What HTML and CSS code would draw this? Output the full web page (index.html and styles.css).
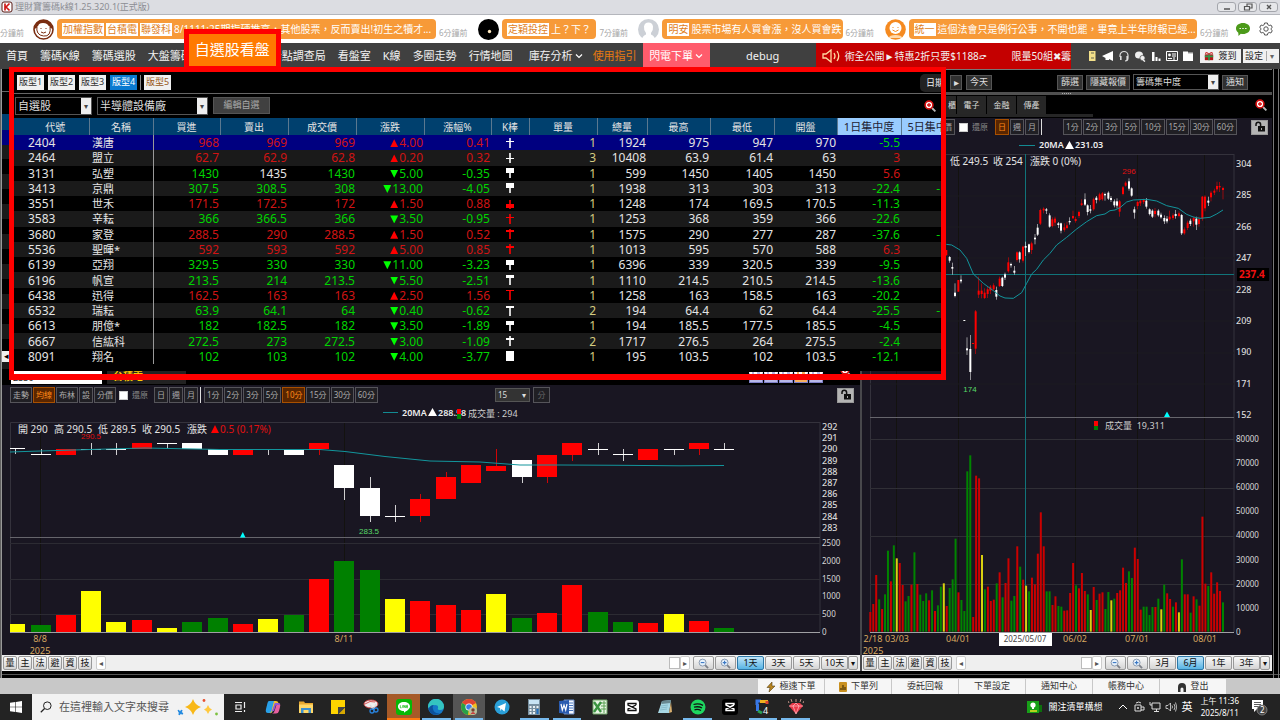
FILE: index.html
```html
<!DOCTYPE html>
<html lang="zh-Hant">
<head>
<meta charset="utf-8">
<title>理財寶籌碼k線</title>
<link rel="stylesheet" href="styles.css">
</head>
<body>
<svg width="0" height="0" class="defs" aria-hidden="true">
  <symbol id="zoom" viewBox="0 0 12 12"><path d="M8 8l3.400 3.400" stroke="#bbb" stroke-width="1.800"/><circle cx="5" cy="5" r="3.900" fill="#fff" stroke="#d81010" stroke-width="1.600"/><path d="M5 3v4M3 5h4" stroke="#d81010" stroke-width="1.300"/></symbol>
  <symbol id="lock" viewBox="0 0 16 14"><path d="M4 6V4.500a2.300 2.300 0 0 1 4.600 0V6" fill="none" stroke="#111" stroke-width="1.500"/><rect x="6" y="6" width="7" height="5.500" fill="#111"/><rect x="9" y="8" width="1" height="2" fill="#aaa"/></symbol>
  <symbol id="minus" viewBox="0 0 12 12"><path d="M7.800 7.800L11 11" stroke="#7c8088" stroke-width="2"/><circle cx="5" cy="5" r="3.800" fill="#e6f1fb" stroke="#8394ab"/><path d="M3 5h4" stroke="#3b78c4" stroke-width="1.200"/></symbol>
  <symbol id="plus" viewBox="0 0 12 12"><path d="M7.800 7.800L11 11" stroke="#7c8088" stroke-width="2"/><circle cx="5" cy="5" r="3.800" fill="#e6f1fb" stroke="#8394ab"/><path d="M3 5h4M5 3v4" stroke="#3b78c4" stroke-width="1.200"/></symbol>
  <symbol id="chev" viewBox="0 0 8 8"><path d="M1 2.500l3 3 3-3" fill="none" stroke="#fff" stroke-width="1.200"/></symbol>
</svg>

<header class="titlebar">
  <svg class="app-icon" viewBox="0 0 12 12"><rect x="1" y="1" width="10" height="10" rx="2" fill="#fff" stroke="#5a1a14"/><path d="M4 2.500v7M8.500 2.500L5 6l3.500 3.500" fill="none" stroke="#d01818" stroke-width="1.700"/></svg>
  <span class="title">理財寶籌碼k線1.25.320.1(正式版)</span>
  <button class="win" aria-label="最小化"><svg viewBox="0 0 10 8"><path d="M2 6h6" stroke="#555" stroke-width="1.500"/></svg></button>
  <button class="win" aria-label="還原"><svg viewBox="0 0 10 8"><path d="M4 3V1h5v4H7M1.500 3.500h5v3.500h-5z" fill="none" stroke="#555" stroke-width="1.200"/></svg></button>
  <button class="win" aria-label="關閉"><svg viewBox="0 0 10 8"><path d="M3 2l4 4M7 2L3 6" stroke="#555" stroke-width="1.400"/></svg></button>
</header>

<section class="ticker">
  <span class="ago lead">分鐘前</span>
  <svg class="avatar" viewBox="0 0 21 21"><circle cx="10.500" cy="10.500" r="9.500" fill="#fff" stroke="#7a2c10" stroke-width="1.600"/><path d="M1.500 10a9 9 0 0 1 18 0l-3.500-2q-1-4-6-4T5 8z" fill="#7a2c10"/><path d="M4 7q-1.500 9 6.500 10T17 7" fill="#fff" stroke="#7a2c10"/><path d="M8 9v1M13 9v1M8 13q2.500 2 5 0" fill="none" stroke="#7a2c10"/></svg>
  <div class="bubble b1"><b>加權指數</b><b>台積電</b><b>聯發科</b><span>8/1111:25期指硬推高，其他股票，反而賣出!初生之犢才...</span></div>
  <span class="ago">6分鐘前</span>
  <svg class="avatar" viewBox="0 0 21 21"><circle cx="10.500" cy="10.500" r="10.500"/><circle cx="11.500" cy="12.500" r="1.700" fill="#ffe9c0"/></svg>
  <div class="bubble b2"><b>定穎投控</b><span>上？下？</span></div>
  <span class="ago">7分鐘前</span>
  <svg class="avatar" viewBox="0 0 21 21"><circle cx="10.500" cy="10.500" r="10.500" fill="#ccd0d6"/><path d="M4 21q0-4 4-5.500V14Q5.500 11 6 7.500q.6-4 4.500-4T15 7.500q.5 3.500-2 6.500v1.500Q17 17 17 21z" fill="#fff"/></svg>
  <div class="bubble b3"><b>明安</b><span>股票市場有人買會漲，沒人買會跌</span></div>
  <span class="ago">6分鐘前</span>
  <svg class="avatar" viewBox="0 0 21 21"><circle cx="10.500" cy="10.500" r="10.300" fill="#f58a20"/><circle cx="10.500" cy="9" r="6" fill="#fff"/><path d="M3.500 19q1-3 7-3t7 3" fill="#ffd9ab"/><path d="M8 8v1M13 8v1M7.500 11q3 3 6 0" fill="none" stroke="#f58a20"/></svg>
  <div class="bubble b4"><b>統一</b><span>這個法會只是例行公事，不開也罷，畢竟上半年財報已經...</span></div>
  <span class="ago last">6分鐘前</span>
  <svg class="chat" viewBox="0 0 16 15"><path d="M8 1c4 0 7 2.300 7 5.500S12 12 8 12c-.8 0-1.500 0-2.200-.3L3.500 14l-.2-3.300C1.800 9.600 1 8.100 1 6.500 1 3.300 4 1 8 1z" fill="#4c9a1a"/><path d="M4.500 6.500h1.400M7.300 6.500h1.400M10.100 6.500h1.400" stroke="#fff" stroke-width="1.200"/></svg>
  <svg class="gear" viewBox="0 0 14 14"><path d="M5.600 1h2.800l.4 1.700 1.400.8 1.700-.5 1.400 2.400L12 6.500v1l1.300 1.100-1.400 2.400-1.700-.5-1.400.8L8.400 13H5.600l-.4-1.700-1.400-.8-1.700.5L.7 8.600 2 7.500v-1L.7 5.400 2.100 3l1.700.5 1.400-.8z" fill="none" stroke="#555"/><circle cx="7" cy="7" r="2.200" fill="none" stroke="#555"/></svg>
</section>

<nav class="menu">
  <a href="#">首頁</a><a href="#">籌碼K線</a><a href="#">籌碼選股</a><a href="#">大盤籌碼</a>
  <span class="current"><a href="#" class="badge">自選股看盤</a></span>
  <a href="#">分點調查局</a><a href="#">看盤室</a><a href="#">K線</a><a href="#">多圈走勢</a><a href="#">行情地圖</a>
  <a href="#" class="drop">庫存分析 <svg><use href="#chev"/></svg></a>
  <a href="#" class="guide">使用指引</a>
  <button class="flash">閃電下單 <svg><use href="#chev"/></svg></button>
  <span class="debug">debug</span>
  <div class="promo"><svg viewBox="0 0 20 14"><path d="M1 5h3l5-4v12L4 9H1z" fill="none" stroke="#ffd9a0" stroke-width="1.300"/><path d="M12 4q2 3 0 6M15 2q3.500 5 0 10" fill="none" stroke="#ffd9a0" stroke-width="1.300"/></svg><span>術全公開►特惠2折只要$1188👉︎</span><span class="p2">限量50組✖籌</span></div>
  <div class="tools">
    <svg viewBox="0 0 12 12"><rect x="3" y="1" width="6.500" height="10" fill="#f3e08a"/><path d="M5 3h3M5 8h3" stroke="#665"/></svg>
    <svg viewBox="0 0 12 12"><path d="M0 6l11-5v10L7 9v1H3.500V8z" fill="#fff"/></svg>
    <svg viewBox="0 0 12 12"><path d="M2 7V5.500a4 4 0 0 1 8 0V8q0 3-3 3" fill="none" stroke="#ddd" stroke-width="1.200"/><path d="M2 6h1.600v4H2zM8.400 6H10v4H8.400z" fill="#ddd"/></svg>
    <svg viewBox="0 0 12 12"><ellipse cx="5" cy="5" rx="4" ry="3.600" fill="#eee"/><circle cx="8.500" cy="8" r="2.600" fill="#eee" stroke="#404040" stroke-width=".7"/><path d="M9 10l2 1.500" stroke="#eee" stroke-width="1.500"/></svg>
    <svg viewBox="0 0 12 12"><path d="M2 2h2.500v9H2zM5.500 7h2v4h-2zM8.500 8.500h2V11h-2z" fill="#fff"/></svg>
    <svg viewBox="0 0 12 12"><path d="M.5 1.500h11v9H.5z" fill="none" stroke="#fff"/><circle cx="3.500" cy="5" r="1.400" fill="#fff"/><path d="M6 4h4M6 6h4M2 8.500h4M8 7v3" stroke="#fff"/></svg>
    <svg viewBox="0 0 12 12"><path d="M1 1.500h5v1h5v8.500H1z" fill="#fff"/><path d="M6 3h5" stroke="#666" stroke-width=".6"/></svg>
    <button class="light"><svg viewBox="0 0 12 12"><path d="M1 4h10v7H1z" fill="#b01818"/><path d="M6 3v8M1 6.500h10" stroke="#2e9a4a" stroke-width="2"/><path d="M6 4Q2 0 2 3.500M6 4q4-4 4-.5" fill="none" stroke="#c33" stroke-width="1.300"/></svg>簽到</button>
    <button class="light set">設定<i>▾</i></button>
  </div>
</nav>

<main class="workspace">
  <section class="panel">
    <div class="under"><button aria-label="向左捲動">◂</button></div>
    <div class="symbolrow">
      <input aria-label="股票代號" value="2330"><span class="symname">台積電</span>
      <div class="minis"><i></i><i></i><i></i><i class="on"></i><i></i></div>
      <svg class="zoomicon"><use href="#zoom"/></svg>
    </div>
    <div class="chartbar">
      <button>走勢</button><button class="on">均線</button><button>布林</button><button>設</button><button>分價</button>
      <label><input type="checkbox">還原</label>
      <button>日</button><button>週</button><button>月</button><i class="sep"></i>
      <div class="mins"><button>1分</button><button>2分</button><button>3分</button><button>5分</button><button class="on">10分</button><button>15分</button><button>30分</button><button>60分</button></div>
      <div class="custom"><span class="sel small"><select aria-label="分鐘"><option>15</option></select></span><button class="dim">分</button></div>
      <button class="lock" aria-label="解鎖"><svg><use href="#lock"/></svg></button>
    </div>
    <svg class="chart" id="intraday" viewBox="2 407 858 248" preserveAspectRatio="xMinYMin meet">
      <path d="M383 412.500h15" stroke="#138a92"/>
      <g class="legend"><text x="402" y="416">20MA</text><path d="M428 416h9l-4.500-8z" fill="#fff"/><text x="438" y="416">288.58</text></g>
      <path d="M457 409h4v5h-4z" fill="#f00"/><path d="M457 414h4v5h-4z" fill="green"/>
      <text x="468" y="417" class="vol">成交量 : 294</text>
      <path d="M10.500 632V422.500H820M820 422v210" fill="none" stroke="#34323c"/>
      <path d="M40.500 423v209M344.500 423v209" stroke="#13120f"/>
      <path d="M10 543.500h810M10 579.500h810M10 614.500h810" stroke="#2c2b33"/>
      <path d="M10 537.500h810" stroke="#66656c"/>
      <g class="info"><text x="18" y="433">開 290</text><text x="54" y="433">高 290.5</text><text x="98" y="433">低 289.5</text><text x="142" y="433">收 290.5</text><text x="187" y="433">漲跌</text><path d="M211 433h8l-4-8z" fill="#f00"/><text x="220" y="433" class="up">0.5 (0.17%)</text></g>
      <g id="candlesA"></g>
      <path class="ma" d="M10 452l30-1 50-1.500 55-1.500 75 1.500h100l25 2 40 5 45 4.500 50 1 40 3h40l60 .3 60 .5 44-.3"/>
      <text x="91" y="439" class="mark up mid">290.5</text><text x="369" y="534" class="mark low mid">283.5</text>
      <path d="M240 537.500h5.500l-2.700-5.500z" fill="#0ff"/>
      <path d="M10 632.500h810" stroke="#a0a0a4"/>
      <g class="axis" id="axisA"></g>
      <g class="dates"><text x="40" y="642">8/8</text><text x="40" y="654">2025</text><text x="344" y="642">8/11</text></g>
    </svg>
    <div class="foot">
      <button>量</button><button>主</button><button>法</button><button>避</button><button>資</button><button>技</button><button class="arrow">◂</button>
      <div class="range"><i class="thumb"></i><button class="arrow">▸</button><button class="mag" aria-label="縮小"><svg><use href="#minus"/></svg></button><button class="mag" aria-label="放大"><svg><use href="#plus"/></svg></button><button class="r on">1天</button><button class="r">3天</button><button class="r">5天</button><button class="r">10天</button><button class="more">▾</button></div>
    </div>
  </section>
  <div class="divider"></div>
  <section class="panel">
    <div class="datebar">
      <button class="next" aria-label="下一日">▸</button><button>今天</button>
      <div class="filters"><button>篩選</button><button>隱藏報價</button><span class="sel ind"><select aria-label="指標"><option>籌碼集中度</option></select></span><button>通知</button></div>
    </div>
    <div class="grip"><i></i></div>
    <div class="tabs"><button class="cut">櫃</button><button>電子</button><button>金融</button><button>傳產</button><svg class="zoomicon"><use href="#zoom"/></svg></div>
    <div class="chartbar right">
      <button>分價</button><label><input type="checkbox">還原</label>
      <button class="on">日</button><button>週</button><button>月</button><i class="sep"></i>
      <div class="mins"><button>1分</button><button>2分</button><button>3分</button><button>5分</button><button>10分</button><button>15分</button><button>30分</button><button>60分</button></div>
      <button class="lock" aria-label="解鎖"><svg><use href="#lock"/></svg></button>
    </div>
    <svg class="chart" id="daily" viewBox="862 138 410 517" preserveAspectRatio="xMinYMin meet">
      <path d="M1019 145.500h16" stroke="#138a92"/>
      <g class="legend"><text x="1039" y="148">20MA</text><path d="M1065 149h9l-4.500-8z" fill="#fff"/><text x="1075" y="148">231.03</text></g>
      <path d="M870.500 632V154.500H1234M1234 154v478" fill="none" stroke="#34323c"/>
      <path d="M896.500 155v477M958.500 155v477M1075.500 155v477M1137.500 155v477M1204.500 155v477" stroke="#13120f"/>
      <path d="M870 196h364M870 227h364M870 258h364M870 290h364M870 321h364M870 353h364M870 384h364" stroke="#1d1a20"/>
      <path d="M870 439.500h364M870 488.500h364M870 536.500h364M870 584.500h364" stroke="#302f36"/>
      <path d="M870 417.500h364" stroke="#66656c"/>
      <path d="M1025.500 154v478M870 274.500h364" stroke="#11747a"/>
      <g class="info"><text x="950" y="165">低 249.5</text><text x="993" y="165">收 254</text><text x="1030" y="165">漲跌 0 (0%)</text></g>
      <g id="candlesB" transform="translate(850 140) scale(.33333)"></g>
      <g transform="translate(850 140) scale(.33333)"><path class="ma wide" d="M289 313L305 315 330 330 350 355 370 402 400 430 430 452 450 468 465 474 490 475 515 458 530 430 545 402 560 388 580 360 600 340 620 315 650 292 680 267 710 245 740 227 765 222 780 212 795 210 810 203 830 186 850 180 890 178 920 183 950 197 985 205 1010 223 1030 231 1050 235 1080 232 1100 222 1119 210"/></g>
      <g id="volB" transform="translate(850 410) scale(.33333)"></g>
      <text x="1129" y="174" class="mark up mid">296</text><text x="970" y="392" class="mark low mid">174</text>
      <path d="M1164 417h6l-3-5.500z" fill="#0ff"/>
      <path d="M1094 421h4v5h-4z" fill="#f00"/><path d="M1094 426h4v4h-4z" fill="green"/><text x="1105" y="429" class="vol">成交量&#160; 19,311</text>
      <path d="M870 632.500h364" stroke="#a0a0a4"/>
      <g class="axis" id="axisB"></g>
      <rect x="1237" y="268" width="32" height="13"/><text x="1239" y="278" class="hot">237.4</text>
      <g class="dates"><text x="873" y="642">2/18</text><text x="897" y="642">03/03</text><text x="873" y="654">2025</text><text x="958" y="642">04/01</text><text x="1075" y="642">06/02</text><text x="1137" y="642">07/01</text><text x="1205" y="642">08/01</text></g>
      <rect x="999" y="633" width="53" height="13" fill="#fff"/><text x="1025" y="642" class="tip">2025/05/07</text>
    </svg>
    <div class="foot">
      <button>量</button><button>主</button><button>法</button><button>避</button><button>資</button><button>技</button><button class="arrow">◂</button>
      <div class="range"><i class="thumb"></i><button class="arrow">▸</button><button class="mag" aria-label="縮小"><svg><use href="#minus"/></svg></button><button class="mag" aria-label="放大"><svg><use href="#plus"/></svg></button><button class="r">3月</button><button class="r on">6月</button><button class="r">1年</button><button class="r">3年</button><button class="more">▾</button></div>
    </div>
  </section>

  <section class="watch">
    <div class="layouts"><button>版型1</button><button>版型2</button><button>版型3</button><button class="on">版型4</button><i></i><button class="fifth">版型5</button><span class="datelabel">日期</span></div>
    <div class="pickers"><span class="sel s1"><select aria-label="清單"><option>自選股</option></select></span><span class="sel s2"><select aria-label="群組"><option>半導體設備廠</option></select></span><button>編輯自選</button><svg class="zoomicon"><use href="#zoom"/></svg></div>
    <div class="tablebox">
      <table>
        <colgroup><col class="w75"><col class="w64"><col class="w67"><col class="w68"><col class="w68"><col class="w68"><col class="w67"><col class="w38"><col class="w68"><col class="w50"><col class="w63"><col class="w64"><col class="w63"><col class="w64"><col class="w40"></colgroup>
        <thead><tr><th>代號</th><th>名稱</th><th>買進</th><th>賣出</th><th>成交價</th><th>漲跌</th><th>漲幅%</th><th>K棒</th><th>單量</th><th>總量</th><th>最高</th><th>最低</th><th>開盤</th><th class="ind">1日集中度</th><th class="ind cut">5日集中度</th></tr></thead>
        <tbody id="rows"></tbody>
      </table>
    </div>
  </section>
</main>

<div class="status">
  <button><svg viewBox="0 0 10 10"><path d="M6 0L1 5.500h3L3 10l6-6H6z" fill="#b88420" stroke="#554010" stroke-width=".6"/></svg>極速下單</button>
  <button><svg viewBox="0 0 10 10"><rect x="1" y="0" width="8" height="10" rx="1" fill="#c89020"/><path d="M3 8V6M5 8V3M7 8V5" stroke="#332200"/></svg>下單列</button>
  <button>委託回報</button><button>下單設定</button><button>通知中心</button><button>帳務中心</button>
  <button><svg viewBox="0 0 10 10"><path d="M1 10V5Q1 1 5 1t4 4v5H6.500V7Q6.500 5.500 5 5.500T3.500 7v3z" fill="#333"/></svg>登出</button>
</div>

<footer class="taskbar">
  <button class="start" aria-label="開始"><svg viewBox="0 0 12 12"><path d="M0 1.700L5.400 1v4.700H0zM6 .9L12 0v5.700H6zM0 6.300h5.400V11L0 10.300zM6 6.300h6V12l-6-.9z" fill="#fff"/></svg></button>
  <label class="search"><svg viewBox="0 0 12 12"><circle cx="7.300" cy="4.700" r="3.800" fill="none" stroke="#222"/><path d="M4.600 7.500L.8 11.200" stroke="#222" stroke-width="1.200"/></svg><input placeholder="在這裡輸入文字來搜尋" aria-label="搜尋"><svg class="spark" viewBox="0 0 42 18"><path d="M16 1q2 6 8 8-6 2-8 8-2-6-8-8 6-2 8-8z" fill="#f8b818"/><path d="M31 7q1 3.500 4 4.500-3 1-4 4.500-1-3.500-4-4.500 3-1 4-4.500z" fill="#ffc940"/><path d="M1 12l2 1.500L5 12l-.5 2L6 16l-2.300-.3L2 17l.2-2.300z" fill="#1e88e0" stroke="#1e88e0"/><circle cx="27" cy="2.500" r="1.400" fill="#e85030"/><circle cx="39.500" cy="16" r="1.400" fill="#7cc040"/></svg></label>
  <div class="apps">
    <button aria-label="工作檢視"><svg viewBox="0 0 16 16"><path d="M3 3.500h7M3 12.500h7M4 6h5v4H4zM12.500 3v6M12.500 11v2" fill="none" stroke="#eee" stroke-width="1.200"/></svg></button>
    <button aria-label="Copilot"><svg viewBox="0 0 16 16"><path d="M4 2h5q2 0 1 3L8 12q-1 2-3 2H3Q0 14 1 10L2.500 4Q3 2 4 2z" fill="#28a0e8"/><path d="M9 2h2q2 0 2.500 2H10L7 13q-.7 1.500-2 1H4q2 0 2.500-2z" fill="#f0c030"/><path d="M12 4h1q3 0 2 4l-1 4q-.7 2.500-3 2.500H7Q9 14 9.500 12z" fill="#e860a0"/><path d="M10 4h3q2 0 2 2h-4L9 12H7z" fill="#9058d8"/></svg></button>
    <button aria-label="檔案總管"><svg viewBox="0 0 16 16"><path d="M1 2.500h5l1 1.500h8v9H1z" fill="#e8a830"/><path d="M1 5.500h14V14H1z" fill="#ffd868"/><path d="M3 9h10v5H3z" fill="#3c90d0"/><path d="M5.500 11h5v3h-5z" fill="#ffd868"/></svg></button>
    <button aria-label="自黏便箋"><svg viewBox="0 0 16 16"><path d="M1 1h14v14H1z" fill="#ffd400"/><path d="M8 8h7v1l-6 6H8z" fill="#444"/><path d="M15 9v6H9z" fill="#d8a800"/></svg></button>
    <button aria-label="剪取工具"><svg viewBox="0 0 16 16"><ellipse cx="8" cy="5" rx="7" ry="4" fill="#eee" stroke="#c44"/><path d="M2 5q5-4 10-2" stroke="#d55" fill="none"/><path d="M7 6l4 5M13 5l-3 6" stroke="#ddd" stroke-width="1.300"/><circle cx="9" cy="12" r="2" fill="none" stroke="#2880d8" stroke-width="1.300"/><circle cx="13" cy="11" r="2" fill="none" stroke="#2880d8" stroke-width="1.300"/></svg></button>
    <button class="line" aria-label="LINE"><svg viewBox="0 0 16 16"><rect width="16" height="16" rx="3" fill="#06b806"/><path d="M8 3c3.500 0 6 2 6 4.500S10.500 12 8 13.700V12C4.500 12 2 10 2 7.500S4.500 3 8 3z" fill="#fff"/><path d="M4.300 6.200v2.600h1.300M6.700 6.200v2.600M7.800 8.800V6.200l1.500 2.600V6.200M12 6.300h-1.400v2.400H12M10.600 7.500H12" stroke="#06b806" stroke-width=".7" fill="none"/></svg></button>
    <button class="open" aria-label="Edge"><svg viewBox="0 0 16 16"><circle cx="8" cy="8" r="8" fill="#1478c8"/><path d="M0 8a8 8 0 0 1 16-.5q0 3.500-4 3.500-3 0-2-2 .5-3-3-3Q3 6 0 9z" fill="#34c4c0"/><path d="M5 10q1 5 7 4-4 3-8 1-3-2-3-5 1-4 5-4-2 1-1 4z" fill="#0c509c"/></svg></button>
    <button class="open active" aria-label="Chrome"><svg viewBox="0 0 16 16"><circle cx="8" cy="8" r="8" fill="#f0c020"/><path d="M8 8L1.200 4A8 8 0 0 1 15 4z" fill="#e04434"/><path d="M8 8l-6.800-4A8 8 0 0 0 7 16z" fill="#28a048"/><circle cx="8" cy="8" r="3.600" fill="#fff"/><circle cx="8" cy="8" r="2.800" fill="#3c7ce8"/><circle cx="12" cy="12" r="4" fill="#b8c0a0"/><circle cx="12" cy="11" r="1.700" fill="#7a4030"/><path d="M9.500 15q2.500-4 5 0z" fill="#c84040"/></svg></button>
    <button aria-label="Telegram"><svg viewBox="0 0 16 16"><circle cx="8" cy="8" r="7.500" fill="#2a9fd8"/><path d="M3 8l9-4-1.500 8.500L7.500 10 6.500 12 6 9z" fill="#fff"/></svg></button>
    <button class="open" aria-label="小算盤"><svg viewBox="0 0 16 16"><path d="M2 0h12v16H2z" fill="#7890a0"/><path d="M3 1h10v4H3z" fill="#c8e4f4"/><path d="M3.500 7h2v2h-2zM7 7h2v2H7zM3.500 10h2v2h-2zM7 10h2v2H7zM3.500 13h2v2h-2zM7 13h2v2H7zM10.500 7h2v2h-2z" fill="#e8f0f4"/><path d="M10.500 10h2v5h-2z" fill="#2070c0"/></svg></button>
    <button class="open" aria-label="Word"><svg viewBox="0 0 16 16"><path d="M5 1h10v14H5z" fill="#f4f8ff" stroke="#6888c0"/><path d="M10 4h4M10 6.500h4M10 9h4M10 11.500h4" stroke="#4878c0"/><path d="M0 2l10-1v14L0 14z" fill="#2a5cb0"/><path d="M2 5l1.300 6L5 6l1.700 5L8 5" fill="none" stroke="#fff" stroke-width="1.200"/></svg></button>
    <button aria-label="Excel"><svg viewBox="0 0 16 16"><path d="M1 1h14v14H1z" fill="#e8f4e4" stroke="#70a868"/><path d="M9 4h5M9 7h5M9 10h5M12 2v12" stroke="#58a050"/><path d="M2 3l7 10M9 3L2 13" stroke="#3a9440" stroke-width="2.400"/></svg></button>
    <button aria-label="CapCut"><svg viewBox="0 0 16 16"><rect x="1" y="1" width="14" height="14" rx="3" fill="#fff"/><path d="M12 6V4.500H4V6l8 4v1.500H4V10l8-4" fill="none" stroke="#111" stroke-width="1.300"/></svg></button>
    <button aria-label="記事本"><svg viewBox="0 0 16 16"><path d="M5 2l9-1-2 13H1z" fill="#a8d8e4"/><path d="M5 2l9-1-.5 3-9 1z" fill="#688890"/><path d="M12 14l3-1-1-10z" fill="#d8b070"/><path d="M4 7l7-1M3.500 9l7-1M3 11l7-1" stroke="#70a8b8" stroke-width=".6"/></svg></button>
    <button class="open" aria-label="Spotify"><svg viewBox="0 0 16 16"><circle cx="8" cy="8" r="7.500" fill="#1ed760"/><path d="M3.500 5.500q5-1.500 9.500.8M4 8.200q4.500-1.200 8 .8M4.500 10.800q3.500-1 6.500.7" fill="none" stroke="#111" stroke-width="1.300"/></svg></button>
    <button aria-label="CapCut 專業版"><svg viewBox="0 0 16 16"><rect width="16" height="16" rx="3" fill="#000"/><path d="M12 6V4.500H4V6l8 4v1.500H4V10l8-4" fill="none" stroke="#fff" stroke-width="1.400"/></svg></button>
    <button class="open" aria-label="Google"><svg viewBox="0 0 16 16"><path d="M2 6V2h4" stroke="#3878e8" stroke-width="3" fill="none"/><path d="M5 2.500h8" stroke="#f0b020" stroke-width="3"/><path d="M2.500 5v7" stroke="#3878e8" stroke-width="3"/><path d="M3 12l4 2" stroke="#28a050" stroke-width="3"/><path d="M12 2v3" stroke="#e04030" stroke-width="3"/><text x="8" y="15" font-size="9" fill="#fff">4</text></svg></button>
    <button class="open" aria-label="寶石"><svg viewBox="0 0 16 16"><path d="M1 7l3-3h8l3 3-7 8z" fill="#e83848"/><path d="M1 7h14M5 7l3 8 3-8-3-3z" fill="none" stroke="#ffc0c8" stroke-width=".7"/><path d="M1 4L0 2M4 3L3 0M8 3V0M12 3l1-3M15 4l1-2" stroke="#e8b0a0" stroke-width=".8"/></svg></button>
  </div>
  <div class="tray">
    <svg class="news" viewBox="0 0 15 13"><path d="M0 0h12v12H0z" fill="#18a018"/><path d="M12 4h3v7h-3z" fill="#0c700c"/><path d="M3 10h7" stroke="#e8e020" stroke-width="1.500"/><circle cx="6" cy="4" r="2.600" fill="#fff"/><path d="M5 6h2v2H5z" fill="#fff"/></svg>
    <span class="topic">關注清單構想</span>
    <svg class="ti" viewBox="0 0 12 12"><path d="M2 8l4-4 4 4" fill="none" stroke="#fff"/></svg>
    <svg class="ti" viewBox="0 0 12 12"><path d="M2 4h6v6H2zM8 6h3v3H8M3 2q3-2 5 0" fill="none" stroke="#ddd"/><circle cx="5" cy="7" r="1" fill="#ddd"/></svg>
    <svg class="ti" viewBox="0 0 12 12"><path d="M3 2h8v6H3zM5 10.500h5M7.500 8v2M1 1v3h2" fill="none" stroke="#ddd"/></svg>
    <svg class="ti" viewBox="0 0 12 12"><path d="M1 4.500h2l2.500-2.500v8L3 7.500H1zM7 4.500q1 1.500 0 3M9 3q2 3 0 6M10.500 1.500q2.500 4.500 0 9" fill="none" stroke="#ddd" stroke-width=".8"/></svg>
    <span class="ime">英</span>
    <time>上午 11:36<br>2025/8/11</time>
    <svg class="notice" viewBox="0 0 17 17"><path d="M1 1h11v9H6l-3 3v-3H1z" fill="#fff"/><path d="M3 3.500h7M3 5.500h7M3 7.500h5" stroke="#333" stroke-width=".8"/><circle cx="11" cy="11" r="5" fill="#444" stroke="#999" stroke-width=".7"/><text x="9" y="14" font-size="8" fill="#fff">2</text></svg>
  </div>
</footer>
<script src="app.js"></script>
</body>
</html>
```
FILE: styles.css
```css
* { box-sizing: border-box; }
html, body { height: 100%; }
body {
  margin: 0; min-height: 720px; display: flex; flex-direction: column; overflow: hidden;
  background: #000; color: #ddd;
  font: 10px/1.2 "Noto Sans", "Noto Sans CJK TC", sans-serif;
}
button, input, select { font: inherit; color: inherit; margin: 0; padding: 0; border: 0; background: none; }
button { display: inline-flex; align-items: center; justify-content: center; white-space: nowrap; }
a { color: inherit; text-decoration: none; white-space: nowrap; }
i { font-style: normal; }
svg { flex: none; }
.defs { position: absolute; }

.titlebar { height: 15px; flex: none; display: flex; align-items: center; gap: 2px; padding: 0 2px 0 1px; background: #dcdde2; border-bottom: 1px solid #b4b6bc; }
.app-icon { width: 12px; height: 12px; }
.title { flex: 1; color: #8c8e94; font-size: 9px; }
.win { width: 19px; height: 10px; border: 1px solid #a4a6ac; border-radius: 3px; background: #e6e7ea; }
.win svg { width: 10px; height: 8px; }

.ticker { height: 28px; flex: none; display: flex; align-items: center; background: #fff; padding-right: 7px; }
.ago { width: 42px; flex: none; padding: 8px 0 0 3px; font-size: 8px; color: #a8a8a8; white-space: nowrap; }
.ago.lead { width: 33px; padding-left: 0; }
.ago.last { width: 38px; }
.avatar { width: 21px; height: 21px; }
.bubble { margin-left: 3px; height: 20px; padding: 0 5px; border-radius: 4px; background: #f79a38; color: #fff; display: flex; align-items: center; gap: 2px; overflow: hidden; white-space: nowrap; min-width: 0; }
.bubble b { font-weight: 400; height: 13px; line-height: 12px; padding: 0 1px; background: #fff; color: #e0801c; flex: none; }
.bubble span { font-size: 10px; }
.b1 { flex: 371 1 0; } .b2 { flex: 85 1 0; } .b3 { flex: 171 1 0; } .b4 { flex: 280 1 0; }
.chat { width: 16px; height: 15px; margin-right: 8px; }
.gear { width: 14px; height: 14px; }

.menu { height: 26px; flex: none; display: flex; align-items: center; gap: 12px; padding-left: 6px; background: #404040; color: #f2f2f2; font-size: 11px; }
.current { position: relative; width: 55px; height: 26px; flex: none; }
.badge { position: absolute; z-index: 5; left: -20px; top: -14px; width: 97px; height: 40px; border: 5px solid #f00; border-bottom-width: 3px; background: #ff7a00; color: #fff; font-size: 15px; line-height: 31px; text-align: center; }
.drop, .flash { display: flex; align-items: center; gap: 2px; }
.drop { margin-left: 4px; }
.drop svg, .flash svg { width: 8px; height: 8px; }
.menu .guide { color: #e87a10; margin-left: -2px; }
.flash { height: 26px; width: 67px; margin-left: -6px; background: #ff5c6c; color: #fff; }
.debug { width: 106px; text-align: center; margin-left: -12px; font-size: 11px; }
.promo { flex: 1; min-width: 0; height: 26px; margin: 0 -12px; background: #c40000; display: flex; align-items: center; gap: 3px; padding-left: 6px; white-space: nowrap; overflow: hidden; font-size: 10px; }
.promo svg { width: 20px; height: 14px; }
.promo .p2 { margin-left: auto; }
.tools { width: 209px; flex: none; display: flex; align-items: center; gap: 4px; padding: 0 2px 0 15px; }
.tools > svg { width: 12px; height: 12px; }
.light { height: 14px; width: 41px; flex: none; background: #f0f0f0; color: #222; font-size: 9px; gap: 4px; margin-left: 2px; }
.light svg { width: 10px; height: 10px; }
.light.set { width: 36px; margin-left: -2px; gap: 3px; }
.light.set i { width: 11px; font-size: 8px; color: #666; border-left: 1px solid #aaa; }

.workspace { position: relative; flex: 1; min-height: 0; display: grid; grid-template-columns: minmax(0, 858fr) 2px minmax(0, 410fr); padding: 0 8px 7px 2px; background: linear-gradient(90deg, #606060 0 1px, #999 1px 2px, transparent 2px calc(100% - 7px), #777 calc(100% - 7px) calc(100% - 6px), transparent calc(100% - 6px) calc(100% - 2px), #777 calc(100% - 2px) calc(100% - 1px), transparent 0), linear-gradient(0deg, #000 0 3px, #555 3px 4px, #000 4px); }
.panel { display: flex; flex-direction: column; min-width: 0; min-height: 0; }
.divider { background: #48484c; }
.under { flex: none; height: 301px; display: flex; align-items: flex-end; padding-bottom: 8px; background: linear-gradient(#000 0 22px, #666 22px 23px, #000 23px 45px, #004070 45px 61px, #000080 61px 76px, transparent 76px), repeating-linear-gradient(#000 0 15px, #1b1b1b 15px 30px); }
.under button { width: 9px; height: 11px; background: #eee; color: #000; font-size: 9px; }
.symbolrow { flex: none; height: 15px; display: flex; align-items: center; padding: 1px 8px 1px 9px; background: #000; }
.symbolrow input { width: 91px; height: 13px; background: #fff; color: #222; padding-left: 2px; font-size: 9px; line-height: 9px; }
.symname { margin-left: 5px; width: 79px; height: 13px; padding-left: 6px; background: #222; color: #fc0; font-weight: 700; line-height: 10px; }
.symbolrow .zoomicon { align-self: flex-start; margin-top: -6px; }
.minis { margin-left: auto; display: flex; gap: 1px; margin-right: 17px; }
.minis i { width: 14px; height: 11px; background: #b8b8e8; border: 1px solid #8080c8; border-top: 3px dotted #fff; }
.minis .on { background: #f8b060; }
.zoomicon { width: 12px; height: 12px; }

.chartbar { flex: none; height: 22px; display: flex; align-items: center; padding: 0 6px 2px 8px; background: #191622; font-size: 8px; color: #aaa; gap: 1px; }
.chartbar button { height: 16px; padding: 0 2px; border: 1px solid #55545a; background: #201f24; flex: none; min-width: 14px; }
.chartbar button.on { background: #5a2600; border-color: #a85000; color: #ff8a18; }
.chartbar label { display: flex; align-items: center; gap: 4px; margin: 0 5px 0 2px; white-space: nowrap; color: #888; }
.chartbar input { appearance: none; width: 9px; height: 9px; background: #fff; border: 1px solid #ccc; }
.chartbar .sep { width: 1px; height: 16px; background: #ddd; margin: 0 2px 0 1px; }
.mins { display: flex; gap: 1px; }
.chartbar .custom { display: flex; gap: 3px; align-items: center; margin: 0 auto 0 116px; }
.chartbar .dim { color: #666; width: 17px; }
.chartbar .lock { width: 17px; height: 15px; background: #b4b4b4; padding: 0; border-color: #999; }
.lock svg { width: 16px; height: 14px; }
.chartbar.right { height: 20px; padding-left: 71px; padding-right: 4px; }
.right label { margin-left: 3px; margin-right: 6px; }
.right .mins { margin: 0 13px 0 auto; }

.sel { position: relative; display: inline-flex; height: 16px; border: 1px solid #555; background: #000; color: #ddd; flex: none; }
.sel select { appearance: none; width: 100%; padding: 0 12px 0 2px; outline: 0; }
.sel::after { content: "▾"; position: absolute; right: 0; top: 0; bottom: 0; width: 10px; background: #eee; color: #444; font-size: 8px; line-height: 14px; text-align: center; pointer-events: none; }
.sel.small { width: 35px; height: 14px; background: #333; }
.sel.small::after { background: none; color: #ddd; line-height: 11px; }
.sel.ind { width: 86px; }

.chart { flex: 1; min-height: 0; width: 100%; display: block; background: #191622; }
.legend { font-weight: 600; font-size: 9px; fill: #eee; }
.vol { font-size: 9px; fill: #ccc; }
.info { font-size: 10px; fill: #e4e4e4; }
.chart .up { fill: #e01010; }
.mark { font-family: "Liberation Sans", sans-serif; font-size: 8px; }
.low { fill: #58d868; }
.mid, .dates, .tip { text-anchor: middle; }
.ma { fill: none; stroke: #12959c; }
.ma.wide { stroke-width: 3; }
.axis { fill: #d8d8d8; font-size: 8px; }
.axis .price { font-size: 9px; font-weight: 500; }
.dates { fill: #d8a860; font-size: 9px; }
.tip { fill: #444; font-size: 8px; }
.hot { fill: #f01010; font-size: 10px; font-weight: 700; }

.foot { flex: none; height: 16px; display: flex; align-items: center; gap: 1px; padding: 0 2px 0 1px; background: #efefef; color: #111; font-size: 9px; }
.foot button { height: 14px; width: 14px; flex: none; border: 1px solid #999; border-radius: 2px; background: linear-gradient(#fafafa, #d4d4d4); }
.foot .arrow { width: 10px; margin-left: 3px; background: #fff; border-color: #ccc; font-size: 8px; color: #555; }
.range { margin-left: auto; display: flex; align-items: center; gap: 1px; }
.thumb { width: 11px; height: 12px; background: #fff; border: 1px solid #bbb; }
.foot .range .arrow { margin: 0 2px 0 -1px; }
.foot .mag { width: 21px; } .mag svg { width: 11px; height: 11px; }
.foot .r { width: 27px; } .foot .more { width: 10px; margin-left: -1px; font-size: 8px; }
.foot .r.on { background: linear-gradient(#c0e4f8, #58b4e4); border-color: #2c78a8; }

.datebar { flex: none; height: 23px; display: flex; align-items: center; gap: 4px; padding: 2px 24px 0 84px; border-top: 1px solid #777; font-size: 9px; }
.datebar button { height: 15px; padding: 0 3px; border: 1px solid #555; background: #303030; }
.datebar .next { margin-left: 4px; width: 12px; font-size: 10px; }
.filters { margin-left: auto; display: flex; gap: 3px; align-items: center; }
.grip { flex: none; height: 3px; background: #505050; display: flex; justify-content: center; align-items: center; }
.grip i { width: 10px; height: 1px; background: repeating-linear-gradient(90deg, #aaa 0 1px, transparent 1px 2px); }
.tabs { flex: none; height: 23px; display: flex; align-items: flex-start; gap: 1px; padding: 1px 5px 0 84px; font-size: 8px; background: linear-gradient(90deg, #262626, #262626) 84px 19px / 147px 3px no-repeat, #000; }
.tabs button { width: 29px; height: 18px; background: #272727; }
.tabs .cut { width: 10px; justify-content: flex-end; overflow: hidden; }
.tabs .zoomicon { margin: 3px 0 0 auto; }

.watch { position: absolute; z-index: 3; left: 9px; right: 334px; top: -2px; height: 313px; border: 5px solid #f00; border-bottom-width: 6px; display: flex; flex-direction: column; }
.layouts { flex: none; height: 22px; display: flex; align-items: center; gap: 4px; padding-left: 3px; background: #000; border-bottom: 1px solid #666; color: #333; font-size: 9px; }
.layouts button { width: 27px; height: 15px; background: #f0f0f0; }
.layouts .on { background: #0a7ad0; color: #fff; }
.layouts i { width: 1px; height: 15px; background: #888; margin: 0 -1px 0 -1px; }
.layouts .fifth { color: #985820; }
.datelabel { margin-left: auto; width: 21px; height: 18px; line-height: 18px; padding-left: 6px; border-radius: 5px 0 0 5px; background: #222; color: #eee; overflow: hidden; white-space: nowrap; }
.pickers { flex: none; height: 24px; display: flex; align-items: center; gap: 5px; padding: 0 5px 1px 1px; background: #000; font-size: 11px; }
.pickers .sel { height: 18px; } .pickers .sel::after { line-height: 16px; }
.s1 { width: 77px; } .s2 { width: 111px; }
.pickers button { width: 57px; height: 17px; background: #404040; border: 1px solid #555; color: #aaa; font-size: 9px; }
.pickers .zoomicon { margin-left: auto; }
.tablebox { background: #000; height: 253px; flex: none; overflow: hidden; }
table { width: 100%; height: 246px; border-collapse: collapse; table-layout: fixed; }
th, td { padding: 0 1px; overflow: hidden; white-space: nowrap; }
th { height: 17px; background: #00406e; color: #e4e4e4; font-size: 10px; font-weight: 400; line-height: 16px; border-right: 1px solid #5a7890; }
th:first-child { padding-left: 9px; }
th.ind { background: #99ccff; color: #223; font-size: 11px; }
th.cut { text-align: left; padding-left: 6px; border: 0; text-overflow: clip; }
td { text-align: right; font-size: 12px; line-height: 15px; color: #e4e4e4; }
tbody tr:nth-child(even) { background: #1a1a1a; }
tbody tr:first-child { background: #000080; }
td:first-child { text-align: left; padding-left: 14px; }
td:nth-child(2) { text-align: left; padding-left: 3px; font-size: 11px; border-right: 1px solid #999; }
td:nth-child(8) { text-align: center; }
td:nth-child(14) { padding-right: 1px; }
td.u { color: #d01414; } td.d { color: #00d400; } td.q { color: #d4cc80; }
td.u s { color: #f00; } td.d s { color: #0f0; }
td s { text-decoration: none; display: inline-block; width: 8px; height: 8px; margin-right: 1px; background: currentColor; }
td.u s { clip-path: polygon(50% 0, 100% 100%, 0 100%); } td.d s { clip-path: polygon(0 0, 100% 0, 50% 100%); }
td svg { display: block; margin: 0 auto; }
.w75 { width: 75px; } .w64 { width: 64px; } .w67 { width: 67px; } .w68 { width: 68px; } .w38 { width: 38px; } .w50 { width: 50px; } .w63 { width: 63px; } .w40 { width: 40px; }

.status { flex: none; height: 16px; display: flex; justify-content: flex-end; gap: 1px; padding: 1px 54px 0 0; background: #c8c8c8; color: #333; font-size: 9px; }
.status button { width: 66px; background: #f6f6f6; gap: 3px; }
.status svg { width: 10px; height: 10px; }

.taskbar { flex: none; height: 26px; display: flex; align-items: center; background: #232323; }
.start { width: 32px; } .start svg { width: 12px; height: 12px; }
.search { width: 192px; height: 26px; flex: none; display: flex; align-items: center; gap: 7px; padding-left: 8px; background: #f2f2f2; }
.search svg { width: 12px; height: 12px; }
.search input { width: 111px; color: #444; font-size: 11px; outline: 0; }
.search input::placeholder { color: #555; }
.search .spark { width: 42px; height: 18px; }
.apps { flex: 588 1 0; height: 26px; display: flex; }
.apps button { flex: 1; min-width: 0; border-bottom: 2px solid transparent; padding-top: 2px; }
.apps svg { width: 16px; height: 16px; }
.apps .open { border-image: linear-gradient(90deg, transparent 9%, #76b9ed 9% 91%, transparent 91%) 1; border-style: solid; border-width: 0 0 2px; }
.apps .active { background: #555; }
.apps .line { background: #a65a28; border-color: #ff7a10; }
.tray { flex: 456 1 0; display: flex; align-items: center; justify-content: flex-end; gap: 4px; padding-right: 12px; color: #fff; white-space: nowrap; }
.news { width: 15px; height: 13px; margin-right: 2px; }
.topic { font-size: 9px; margin-right: 11px; }
.ti { width: 12px; height: 12px; }
.ime { font-size: 11px; }
.tray time { font-size: 8px; line-height: 12px; text-align: center; margin-left: 4px; }
.notice { width: 17px; height: 17px; margin-left: 8px; }
```
FILE: app.js
```js
const stocks = `2404 漢唐 968 969 969 4.00 0.41 w,3,1,0,10 1 1924 975 947 970 -5.5
2464 盟立 62.7 62.9 62.8 0.20 0.32 w,5,1,0,10 3 10408 63.9 61.4 63 3
3131 弘塑 1430 *1435 1430 5.00 -0.35 w,0,5,0,10 1 599 1450 1405 1450 5.6
3413 京鼎 307.5 308.5 308 13.00 -4.05 w,0,5,0,10 1 1938 313 303 313 -22.4 -
3551 世禾 171.5 172.5 172 1.50 0.88 r,5,4,1,10 1 1248 174 169.5 170.5 -11.3
3583 辛耘 366 366.5 366 3.50 -0.95 r,3,1,0,10 1 1253 368 359 366 -22.6
3680 家登 288.5 290 288.5 1.50 0.52 r,1,2,0,10 1 1575 290 277 287 -37.6 -
5536 聖暉* 592 593 592 5.00 0.85 r,2,2,0,10 1 1013 595 570 588 6.3
6139 亞翔 329.5 330 330 11.00 -3.23 w,0,5,0,10 1 6396 339 320.5 339 -9.5
6196 帆宣 213.5 214 213.5 5.50 -2.51 w,0,3,0,10 1 1110 214.5 210.5 214.5 -13.6
6438 迅得 162.5 163 163 2.50 1.56 r,0,1,0,10 1 1258 163 158.5 163 -20.2
6532 瑞耘 63.9 64.1 64 0.40 -0.62 w,0,2,0,10 2 194 64.4 62 64.4 -25.5 -
6613 朋億* 182 182.5 182 3.50 -1.89 w,0,4,0,10 1 194 185.5 177.5 185.5 -4.5
6667 信紘科 272.5 273 272.5 3.00 -1.09 w,2,2,0,10 2 1717 276.5 264 275.5 -2.4
8091 翔名 102 103 102 4.00 -3.77 w,0,10,0,10 1 195 103.5 102 103.5 -12.1`;

document.getElementById('rows').innerHTML = stocks.split('\n').map(line => {
  const f = line.split(' ');
  const dir = f[6][0] === '-' ? 'd' : 'u';
  const price = v => v[0] === '*' ? `<td>${v.slice(1)}</td>` : `<td class="${dir}">${v}</td>`;
  const [c, y, h, a, b] = f[7].split(',');
  const fill = c === 'w' ? '#fff' : '#f00';
  const bar = `<svg width="8" height="10" fill="${fill}"><rect x="3" y="${a}" width="2" height="${b - a}" opacity=".8"/><rect y="${y}" width="8" height="${h}"/></svg>`;
  return `<tr><td>${f[0]}</td><td>${f[1]}</td>${price(f[2])}${price(f[3])}${price(f[4])}` +
    `<td class="${dir}"><s></s>${f[5]}</td><td class="${dir}">${f[6]}</td><td>${bar}</td><td class="q">${f[8]}</td>` +
    f.slice(9, 13).map(v => `<td>${v}</td>`).join('') +
    `<td class="${f[13][0] === '-' ? 'd' : 'u'}">${f[13]}</td><td class="d">${f[14] || ''}</td></tr>`;
}).join('');

const colour = { r: '#f00', w: '#fff', g: '#008000', y: '#ff0' };

/* intraday: colour, body top, body bottom, wick top, wick bottom, volume colour, volume top */
const intraday = `w 448 449 448 454 y 624
w 454 455 449 455 g 625
r 449 455 449 455 r 615
w 449 450 443 455 y 591
w 449 450 443 455 y 622
r 443 449 443 449 r 620
w 443 444 443 449 y 628
w 443 449 443 449 g 622
w 449 455 449 455 g 618
r 449 455 449 455 r 624
w 449 450 449 455 y 619
w 449 455 449 455 g 615
r 443 449 443 455 r 579
w 465 488 465 500 g 561
w 488 516 477 522 g 570
w 516 517 505 522 y 599
r 499 516 494 522 r 601
r 477 499 472 499 r 605
r 465 483 465 483 r 610
r 466 471 449 471 y 594
w 460 477 460 483 g 618
r 455 477 455 483 r 613
r 443 455 443 461 r 585
w 449 450 443 455 g 612
w 454 455 449 461 g 622
r 449 460 449 460 r 623
w 449 450 449 455 y 614
r 443 449 443 455 r 621
w 449 450 443 450 g 628`;
document.getElementById('candlesA').innerHTML = intraday.split('\n').map((line, i) => {
  const [c, t, b, wt, wb, vc, vt] = line.split(' ');
  const x = 15.2 + i * 25.32;
  const left = Math.max(10, Math.round(x - 10));
  const w = Math.round(x + 10) - left;
  return `<rect x="${left}" y="${t}" width="${w}" height="${b - t}" fill="${colour[c]}"/>` +
    `<rect x="${Math.round(x)}" y="${wt}" width="1" height="${wb - wt}" fill="${colour[c]}" opacity=".8"/>` +
    `<rect x="${left}" y="${vt}" width="${w}" height="${632 - vt}" fill="${colour[vc]}"/>`;
}).join('');

/* daily: drawn on a grid of three units per pixel */
const daily = `289r330,346,330,346 299w351,362,348,368 307w381,386,368,404 315w458,468,430,472 325r420,455,420,455 333w419,424,406,430 343w540,543,540,543 351w625,631,592,645 361w627,696,585,720 369r609,612,609,612 377r514,626,510,642 386r452,464,410,474 395r452,462,430,475 404r458,474,445,477 413r448,462,440,474 421r440,452,435,462 431r436,448,430,452 439w450,470,440,479 449r416,438,410,441 457w413,438,410,441 465w403,413,398,420 475r367,394,352,398 483w372,376,368,383 493w392,398,378,404 501r337,360,334,365 509w337,358,334,368 519r320,362,317,368 527w318,323,305,348 537w313,336,311,340 545r310,330,305,342 555w293,298,282,313 563w263,284,252,288 571r210,251,206,255 581r206,211,202,220 589w208,212,204,222 599w226,260,220,263 607r238,258,232,262 615r236,248,230,258 625w250,255,246,264 633w250,272,248,280 643r262,270,250,275 651r256,264,245,268 659w243,247,232,254 669r228,235,212,236 677r237,243,230,248 687r216,228,212,234 695r190,195,178,198 705w178,194,160,198 713w196,216,193,226 721w208,212,195,220 731r178,208,173,212 739w173,180,168,190 749r163,180,158,184 757r160,178,156,182 765w162,166,158,182 775w158,176,154,180 783w174,180,168,186 793w184,196,178,202 801w184,197,175,205 809r184,215,180,230 819r142,162,138,166 827r128,137,124,140 837w124,146,115,152 845w145,167,142,170 853w208,218,200,236 863r186,198,182,208 871r182,190,178,198 881r180,186,176,192 889w182,200,174,206 899w208,222,205,226 907w212,230,208,234 915r213,222,204,232 925w212,226,208,230 933w224,232,218,236 943w234,244,226,252 951w236,244,228,250 959r230,238,212,242 969r226,234,220,240 977w222,228,210,236 987r220,228,214,232 995w225,280,222,285 1003r268,280,262,284 1013r248,264,242,270 1021w242,252,236,258 1031r234,244,230,260 1039w236,254,230,270 1047r238,252,230,260 1057r170,236,168,242 1065r170,205,166,214 1075w182,188,170,198 1083r158,172,152,184 1093r152,158,146,165 1101r138,148,125,155 1109r138,142,126,156 1119r144,150,140,178`;
document.getElementById('candlesB').innerHTML = daily.split(' ').map(item => {
  const [, x, c, rest] = item.match(/^(\d+)([rw])(.*)$/);
  const [t, b, wt, wb] = rest.split(',');
  return `<g fill="${colour[c]}"><rect x="${x - 3}" y="${t}" width="6" height="${b - t}"/><rect x="${x - 1}" y="${wt}" width="2" height="${wb - wt}" opacity=".8"/></g>`;
}).join('');

const volume = 'r606 r582 r495 g568 r597 g553 g422 r514 g406 y445 r459 r525 g574 g558 r524 g427 r522 g554 g573 g550 r571 g541 r603 g586 g530 y520 r588 g534 g508 g386 r547 g570 g603 g184 g136 r621 r197 r205 y435 g538 r530 r573 r569 g520 r487 g562 r519 r445 g572 g558 r409 g470 r509 y527 g544 r503 r523 r431 r307 r409 g544 g544 r585 r559 g588 g590 r602 r601 r549 r459 g526 r535 r489 r543 g553 y600 r531 g570 r551 r547 g597 g546 y571 g566 r549 r541 r473 r519 g484 g504 r413 r447 r599 g590 g590 g615 g591 r591 g566 y598 g524 r550 r567 g590 r577 y607 g448 r553 r553 g608 r559 g568 r587 r320 r521 g528 r487 r551 r517 r543 g577'.split(' ');
const step = (1119 - 61) / (volume.length - 1);
const shade = { r: '#cc0000', g: '#008400', y: '#d8d010' };
document.getElementById('volB').innerHTML = volume.map((v, i) => {
  const t = +v.slice(1);
  return `<rect x="${(61 + i * step - 3).toFixed(1)}" y="${t}" width="6" height="${665 - t}" fill="${shade[v[0]]}"/>`;
}).join('');

const labels = (values, x, y0, dy, cls) => values.map((v, i) => `<text x="${x}" y="${Math.round(y0 + i * dy)}" class="${cls}">${v}</text>`).join('');
document.getElementById('axisA').innerHTML =
  labels([292, 291, 290, 289, 288, 287, 286, 285, 284, 283], 822, 430, 11.2, 'price') +
  labels([2500, 2000, 1500, 1000, 500, 0], 822, 546, 17.8, '');
document.getElementById('axisB').innerHTML =
  labels([304, 285, 266, 247, 228, 209, 190, 171, 152], 1236, 167, 31.4, 'price') +
  labels([80000, 70000, 60000, 50000, 40000, 30000, 20000, 10000, 0], 1236, 442, 24.1, '');
```
